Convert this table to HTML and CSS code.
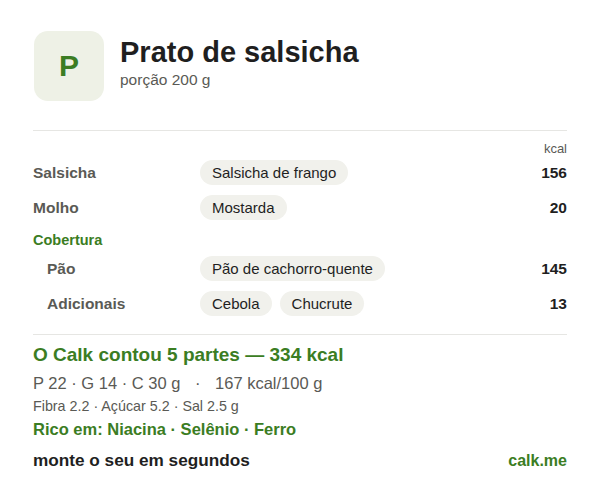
FILE: index.html
```html
<!DOCTYPE html>
<html lang="pt">

<head>
  <meta charset="UTF-8" />
  <title>Prato de salsicha</title>
  <link rel="stylesheet" href="styles.css">
</head>

<body>
  <div class="card">
    <div class="head">
      <div class="avatar">P</div>
      <div class="head-text">
        <h1>Prato de salsicha</h1>
        <div class="portion">porção 200 g</div>
      </div>
    </div>

    <div class="parts">
      <div class="unit">kcal</div>
      <div class="row">
        <div class="label">Salsicha</div>
        <div class="chips"><span class="chip">Salsicha de frango</span></div>
        <div class="kcal">156</div>
      </div>
      <div class="row">
        <div class="label">Molho</div>
        <div class="chips"><span class="chip">Mostarda</span></div>
        <div class="kcal">20</div>
      </div>
      <div class="group">Cobertura</div>
      <div class="row sub">
        <div class="label">Pão</div>
        <div class="chips"><span class="chip">Pão de cachorro-quente</span></div>
        <div class="kcal">145</div>
      </div>
      <div class="row sub">
        <div class="label">Adicionais</div>
        <div class="chips"><span class="chip">Cebola</span><span class="chip">Chucrute</span></div>
        <div class="kcal">13</div>
      </div>
    </div>

    <div class="summary">
      <div class="total">O Calk contou 5 partes — 334 kcal</div>
      <div class="macros">P 22 · G 14 · C 30 g <span class="sep">·</span> 167 kcal/100 g</div>
      <div class="extra">Fibra 2.2 · Açúcar 5.2 · Sal 2.5 g</div>
      <div class="rich">Rico em: Niacina · Selênio · Ferro</div>
    </div>

    <div class="foot">
      <span class="cta">monte o seu em segundos</span>
      <span class="site">calk.me</span>
    </div>
  </div>
</body>

</html>
```

FILE: styles.css
```css
:root {
  --green: #3b7d23;
  --text: #1f1f1f;
  --muted: #5a5a55;
  --chip: #f1f1ec;
  --line: #e6e6e3;
}

body {
  margin: 0;
  background-color: #fff;
  font-family: 'Liberation Sans', Arial, sans-serif;
  color: var(--text);
}

.card {
  padding: 31px 33px 0 33px;
}

/* cabeçalho */
.head {
  display: flex;
  align-items: flex-start;
  gap: 16px;
  padding-bottom: 29px;
  border-bottom: 1px solid var(--line);
}

.avatar {
  width: 70px;
  height: 70px;
  border-radius: 14px;
  background-color: #eef1e6;
  color: var(--green);
  font-size: 30px;
  font-weight: bold;
  display: flex;
  justify-content: center;
  align-items: center;
  margin-left: 1px;
}

.head-text {
  padding-top: 4px;
}

h1 {
  margin: 0 0 2px 0;
  font-size: 29px;
  line-height: 34px;
  color: var(--text);
}

.portion {
  font-size: 15.5px;
  line-height: 18px;
  color: var(--muted);
}

/* partes */
.parts {
  padding: 8px 0 13px 0;
  border-bottom: 1px solid var(--line);
}

.unit {
  text-align: right;
  font-size: 13px;
  color: var(--muted);
  line-height: 12px;
  padding-top: 4px;
}

.row {
  display: grid;
  grid-template-columns: 167px 1fr 60px;
  align-items: center;
  height: 35px;
}

.row.sub .label {
  padding-left: 14px;
}

.label {
  font-size: 15.5px;
  font-weight: bold;
  color: var(--muted);
}

.chips {
  display: flex;
  gap: 8px;
}

.chip {
  background-color: var(--chip);
  border-radius: 13px;
  padding: 0 12px;
  height: 25px;
  line-height: 25px;
  font-size: 15px;
  color: var(--text);
}

.kcal {
  text-align: right;
  font-size: 15.5px;
  font-weight: bold;
}

.group {
  font-size: 14.5px;
  font-weight: bold;
  color: var(--green);
  line-height: 16px;
  padding: 7px 0 3px 0;
}

/* resumo */
.summary {
  padding-top: 9px;
}

.total {
  font-size: 19px;
  font-weight: bold;
  color: var(--green);
  line-height: 22px;
}

.macros {
  font-size: 16.5px;
  color: var(--muted);
  line-height: 20px;
  margin-top: 7px;
}

.macros .sep {
  margin: 0 10px;
}

.extra {
  font-size: 14.3px;
  color: var(--muted);
  line-height: 16px;
  margin-top: 5px;
}

.rich {
  font-size: 16.5px;
  font-weight: bold;
  color: var(--green);
  line-height: 20px;
  margin-top: 5px;
}

.foot {
  display: flex;
  justify-content: space-between;
  align-items: baseline;
  margin-top: 11px;
  line-height: 20px;
}

.cta {
  font-size: 17.2px;
  font-weight: bold;
}

.site {
  font-size: 16px;
  font-weight: bold;
  color: var(--green);
}
```
